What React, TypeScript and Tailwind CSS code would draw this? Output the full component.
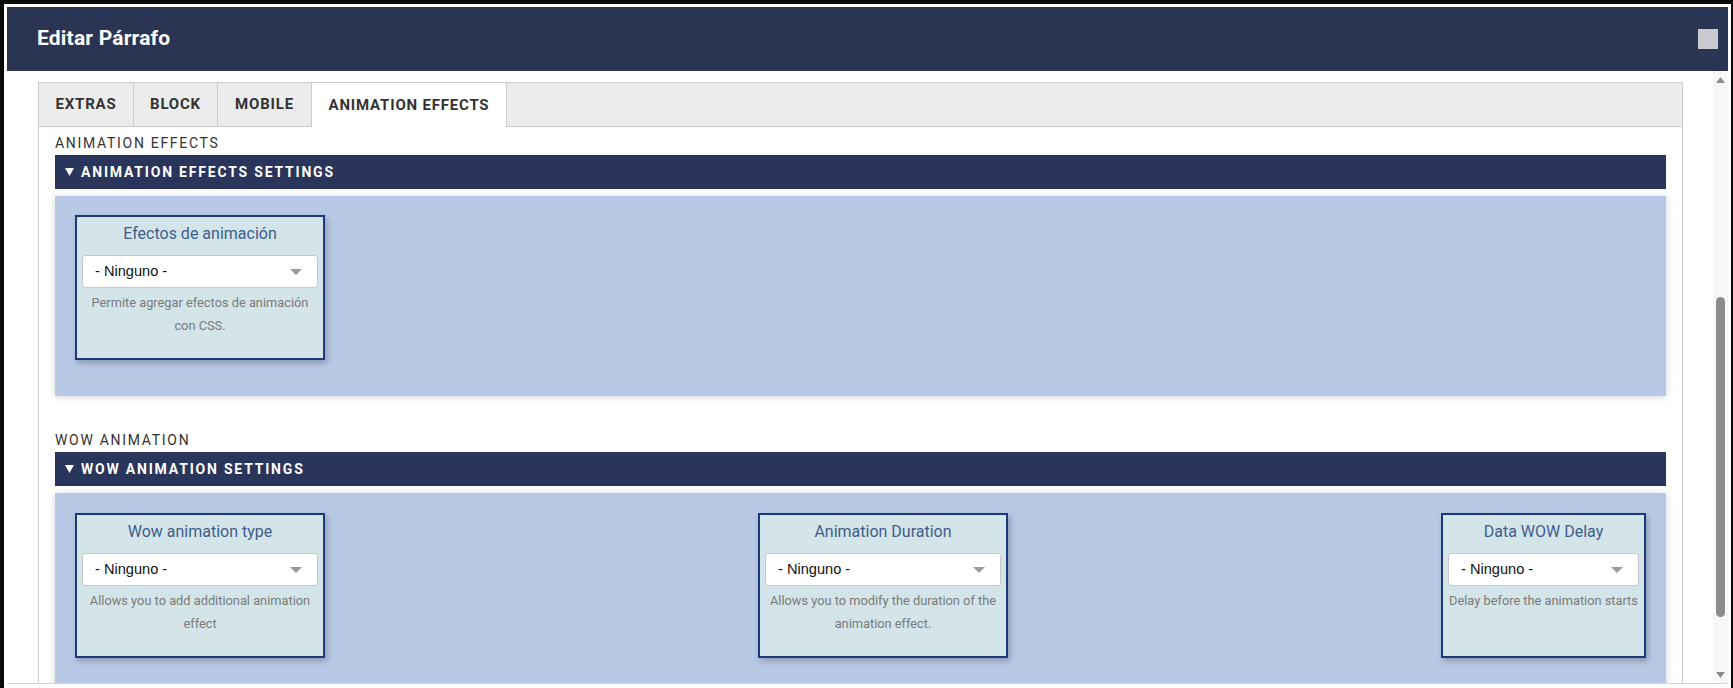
import React from "react";

type FieldProps = {
  title: string;
  help: string;
  wide?: boolean;
};

const Caret = () => (
  <svg width="9" height="8" viewBox="0 0 9 8" className="mr-[7px] shrink-0">
    <path d="M0 0h9L4.5 8z" fill="#ffffff" />
  </svg>
);

const Field = ({ title, help, wide = true }: FieldProps) => {
  return (
    <div
      className={`${wide ? "w-[250px]" : "w-[205px]"} h-[145px] shrink-0 border-2 border-[#1b3a7a] bg-[#d3e5e9] px-[5px] pt-[4px] shadow-[2px_3px_6px_rgba(0,0,0,0.25)]`}
    >
      <div className="text-center text-[16px] leading-[26px] text-[#3f5d8c]">{title}</div>
      <div className="mt-[8px] flex h-[33px] items-center justify-between rounded-[3px] border border-[#c8c8c8] bg-white pl-[12px] pr-[15px]">
        <span className="font-['Liberation_Sans',Arial,sans-serif] text-[14.6px] text-[#111]">- Ninguno -</span>
        <svg width="12" height="6" viewBox="0 0 12 6">
          <path d="M0 0h12L6 6z" fill="#9a9a9a" />
        </svg>
      </div>
      <p className="mt-[3px] text-center text-[12.8px] leading-[23px] text-[#7a7a7a]">{help}</p>
    </div>
  );
};

const SectionBar = ({ label }: { label: string }) => (
  <div className="mt-[2px] flex h-[34px] items-center bg-[#29355a] pl-[10px] text-[14px] font-bold tracking-[1.8px] text-white">
    <Caret />
    {label}
  </div>
);

const App = () => {
  const tabs = [
    { name: "EXTRAS", w: "w-[95px]" },
    { name: "BLOCK", w: "w-[84px]" },
    { name: "MOBILE", w: "w-[94px]" },
  ];

  return (
    <div className="h-[688px] w-[1733px] overflow-hidden bg-[#0a0a0a] pl-[4px] pt-[4px] font-[Roboto,sans-serif]">
      <div className="w-[1727px] bg-white px-[3px] pb-[8px] pt-[3px]">
        <div className="flex h-[64px] items-center justify-between bg-[#2c3453] pl-[30px] pr-[10px]">
          <h1 className="text-[21px] font-bold tracking-[0.2px] text-white">Editar Párrafo</h1>
          <div className="h-[20px] w-[20px] bg-[#c9cad0]" />
        </div>

        <div className="flex h-[613px] overflow-hidden border-b border-[#d6d6d6]">
          <div className="flex-1 pl-[31px] pr-[30px] pt-[11px]">
            <div className="border border-[#cccccc]">
              <div className="flex h-[44px] bg-[#ececec] text-[15px] font-bold tracking-[0.8px] text-[#333]">
                {tabs.map((t) => (
                  <div
                    key={t.name}
                    className={`${t.w} flex items-center justify-center border-b border-r border-[#cccccc]`}
                  >
                    {t.name}
                  </div>
                ))}
                <div className="flex w-[195px] items-center justify-center border-r border-[#cccccc] bg-white">
                  ANIMATION EFFECTS
                </div>
                <div className="flex-1 border-b border-[#cccccc]" />
              </div>

              <div className="px-[16px] pt-[6px]">
                <div className="text-[14px] leading-[20px] tracking-[1.7px] text-[#333]">ANIMATION EFFECTS</div>
                <SectionBar label="ANIMATION EFFECTS SETTINGS" />
                <div className="mt-[7px] h-[200px] bg-[#b8c9e6] px-[20px] pt-[19px] shadow-[0_1px_8px_rgba(0,0,0,0.16)]">
                  <Field title="Efectos de animación" help="Permite agregar efectos de animación con CSS." />
                </div>

                <div className="mt-[34px] text-[14px] leading-[20px] tracking-[1.7px] text-[#333]">WOW ANIMATION</div>
                <SectionBar label="WOW ANIMATION SETTINGS" />
                <div className="mt-[7px] flex h-[240px] items-start justify-between bg-[#b8c9e6] px-[20px] pt-[20px] shadow-[0_1px_8px_rgba(0,0,0,0.16)]">
                  <Field title="Wow animation type" help="Allows you to add additional animation effect" />
                  <Field title="Animation Duration" help="Allows you to modify the duration of the animation effect." />
                  <Field title="Data WOW Delay" help="Delay before the animation starts" wide={false} />
                </div>
              </div>
            </div>
          </div>

          <div className="flex w-[15px] flex-col bg-[#f8f8f8]">
            <div className="flex h-[17px] items-center justify-center">
              <svg width="9" height="6" viewBox="0 0 9 6">
                <path d="M4.5 0L9 6H0z" fill="#8c8c8c" />
              </svg>
            </div>
            <div className="mx-auto mt-[209px] h-[320px] w-[9px] rounded-full bg-[#8c8c8c]" />
            <div className="flex-1" />
            <div className="flex h-[17px] items-center justify-center">
              <svg width="9" height="6" viewBox="0 0 9 6">
                <path d="M0 0h9L4.5 6z" fill="#8c8c8c" />
              </svg>
            </div>
          </div>
        </div>
      </div>
    </div>
  );
};

export default App;
